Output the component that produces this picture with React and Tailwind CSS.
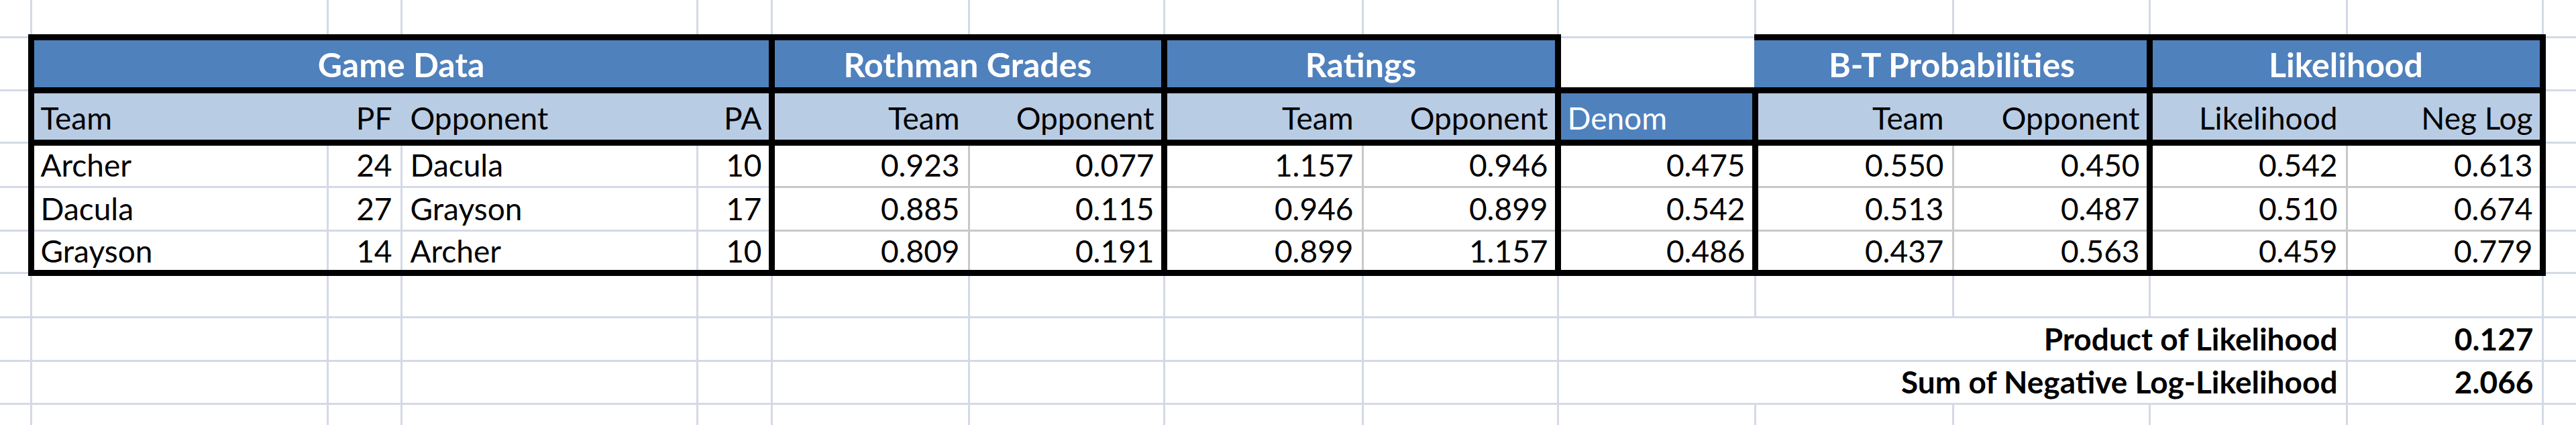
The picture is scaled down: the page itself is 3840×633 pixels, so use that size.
import React from "react";

const COLS = [46, 442, 110, 441, 111, 294, 291, 296, 291, 294, 295, 293, 294, 292, 50];
const ROWH = ["h-[55px]", "h-[79px]", "h-[78px]", "h-[66px]", "h-[65px]", "h-[63px]", "h-[66px]", "h-[65px]", "h-[64px]", "h-[32px]"];
const COLW = ["w-[46px]", "w-[442px]", "w-[110px]", "w-[441px]", "w-[111px]", "w-[294px]", "w-[291px]", "w-[296px]", "w-[291px]", "w-[294px]", "w-[295px]", "w-[293px]", "w-[294px]", "w-[292px]", "w-[50px]"];

const LEFT = {
  N: "border-l-0",
  G: "border-l-[3px] border-l-[#d3d9e6]",
  D: "border-l-[3px] border-l-[#c8c8c8]",
  S: "border-l-[3px] border-l-[#b8cce4]",
  B: "border-l-[3px] border-l-[#4f81bd]",
  K: "border-l-[9px] border-l-black",
};
const RIGHT = {
  N: "border-r-0",
  G: "border-r-[3px] border-r-[#d3d9e6]",
  D: "border-r-[3px] border-r-[#c8c8c8]",
  S: "border-r-[3px] border-r-[#b8cce4]",
  B: "border-r-[3px] border-r-[#4f81bd]",
  K: "border-r-[9px] border-r-black",
};
const TOP = {
  N: "border-t-0",
  G: "border-t-[3px] border-t-[#d3d9e6]",
  D: "border-t-[3px] border-t-[#c8c8c8]",
  S: "border-t-[3px] border-t-[#b8cce4]",
  B: "border-t-[3px] border-t-[#4f81bd]",
  K: "border-t-[9px] border-t-black",
};
const BOTTOM = {
  N: "border-b-0",
  G: "border-b-[3px] border-b-[#d3d9e6]",
  D: "border-b-[3px] border-b-[#c8c8c8]",
  S: "border-b-[3px] border-b-[#b8cce4]",
  B: "border-b-[3px] border-b-[#4f81bd]",
  K: "border-b-[9px] border-b-black",
};

function vKind(r, b) {
  if (b === 0 || b === 15) return "N";
  if (r === 1) {
    if ([1, 5, 7, 9, 12, 14].includes(b)) return "K";
    if (b === 10) return "B";
    return "G";
  }
  if (r >= 2 && r <= 5) {
    if ([1, 5, 7, 9, 10, 12, 14].includes(b)) return "K";
    if (r === 2) return "S";
    if (b <= 4) return "G";
    return "D";
  }
  return "G";
}

function hKind(r, c) {
  if (r === 0 || r === 10) return "N";
  if (r === 1) return c >= 1 && c <= 13 && c !== 9 ? "K" : "G";
  if (r === 2 || r === 3 || r === 6) return c >= 1 && c <= 13 ? "K" : "G";
  if (r === 4 || r === 5) {
    if (c === 0 || c === 14) return "G";
    return c <= 4 ? "G" : "D";
  }
  return "G";
}

const E = (n) => Array.from({ length: n }, () => ({ t: "" }));

const hdr = (t, span) => ({ t, span, k: "hdr" });
const sub = (t, a) => ({ t, k: "sub", a });
const num = (t) => ({ t, a: "r" });
const txt = (t) => ({ t, a: "l" });

const DATA = [
  ["Archer", "24", "Dacula", "10", "0.923", "0.077", "1.157", "0.946", "0.475", "0.550", "0.450", "0.542", "0.613"],
  ["Dacula", "27", "Grayson", "17", "0.885", "0.115", "0.946", "0.899", "0.542", "0.513", "0.487", "0.510", "0.674"],
  ["Grayson", "14", "Archer", "10", "0.809", "0.191", "0.899", "1.157", "0.486", "0.437", "0.563", "0.459", "0.779"],
];

const ROWS = [
  E(15),
  [
    { t: "" },
    hdr("Game Data", 4),
    hdr("Rothman Grades", 2),
    hdr("Ratings", 2),
    { t: "" },
    hdr("B-T Probabilities", 2),
    hdr("Likelihood", 2),
    { t: "" },
  ],
  [
    { t: "" },
    sub("Team", "l"),
    sub("PF", "r"),
    sub("Opponent", "l"),
    sub("PA", "r"),
    sub("Team", "r"),
    sub("Opponent", "r"),
    sub("Team", "r"),
    sub("Opponent", "r"),
    { t: "Denom", k: "denom", a: "l" },
    sub("Team", "r"),
    sub("Opponent", "r"),
    sub("Likelihood", "r"),
    sub("Neg Log", "r"),
    { t: "" },
  ],
  ...DATA.map((d) => [
    { t: "" },
    txt(d[0]),
    num(d[1]),
    txt(d[2]),
    ...d.slice(3).map(num),
    { t: "" },
  ]),
  E(15),
  [...E(9), { t: "Product of Likelihood", span: 4, a: "r", b: true }, { t: "0.127", a: "r", b: true }, { t: "" }],
  [...E(9), { t: "Sum of Negative Log-Likelihood", span: 4, a: "r", b: true }, { t: "2.066", a: "r", b: true }, { t: "" }],
  E(15),
];

function Row({ cells, r }) {
  let col = 0;
  return (
    <tr className={ROWH[r]}>
      {cells.map((cell, i) => {
        const span = cell.span || 1;
        const c0 = col;
        col += span;
        const l = vKind(r, c0);
        const rt = vKind(r, c0 + span);
        const t = hKind(r, c0);
        const b = hKind(r + 1, c0);
        const pl = l === "K" ? "pl-[10px]" : "pl-[12px]";
        const pr = rt === "K" ? "pr-[10px]" : "pr-[12px]";
        let pb = b === "K" ? "pb-[5px]" : "pb-[8px]";
        let look = "bg-white text-black text-[46px] leading-[46px] font-normal";
        if (cell.k === "hdr") {
          look = "bg-[#4f81bd] text-white text-[50px] leading-[50px] font-bold";
          pb = "pb-[9px]";
        } else if (cell.k === "sub") {
          look = "bg-[#b8cce4] text-black text-[46px] leading-[46px] font-normal";
          pb = "pb-[9px]";
        } else if (cell.k === "denom") {
          look = "bg-[#4f81bd] text-white text-[46px] leading-[46px] font-normal";
          pb = "pb-[9px]";
        } else if (cell.b) {
          look = "bg-white text-black text-[46px] leading-[46px] font-bold";
        }
        const align = cell.k === "hdr" ? "text-center" : cell.a === "r" ? "text-right" : "text-left";
        return (
          <td
            key={i}
            colSpan={span}
            className={`p-0 align-bottom whitespace-nowrap overflow-hidden ${pl} ${pr} ${pb} ${look} ${align} ${LEFT[l]} ${RIGHT[rt]} ${TOP[t]} ${BOTTOM[b]}`}
          >
            {cell.t}
          </td>
        );
      })}
    </tr>
  );
}

export default function App() {
  return (
    <div className="w-[3840px] h-[633px] overflow-hidden bg-white">
      <table className="w-[3840px] table-fixed border-collapse font-['Lato','Open_Sans',sans-serif]">
        <colgroup>
          {COLW.map((w, i) => (
            <col key={i} className={w} />
          ))}
        </colgroup>
        <tbody>
          {ROWS.map((cells, r) => (
            <Row key={r} cells={cells} r={r} />
          ))}
        </tbody>
      </table>
    </div>
  );
}
